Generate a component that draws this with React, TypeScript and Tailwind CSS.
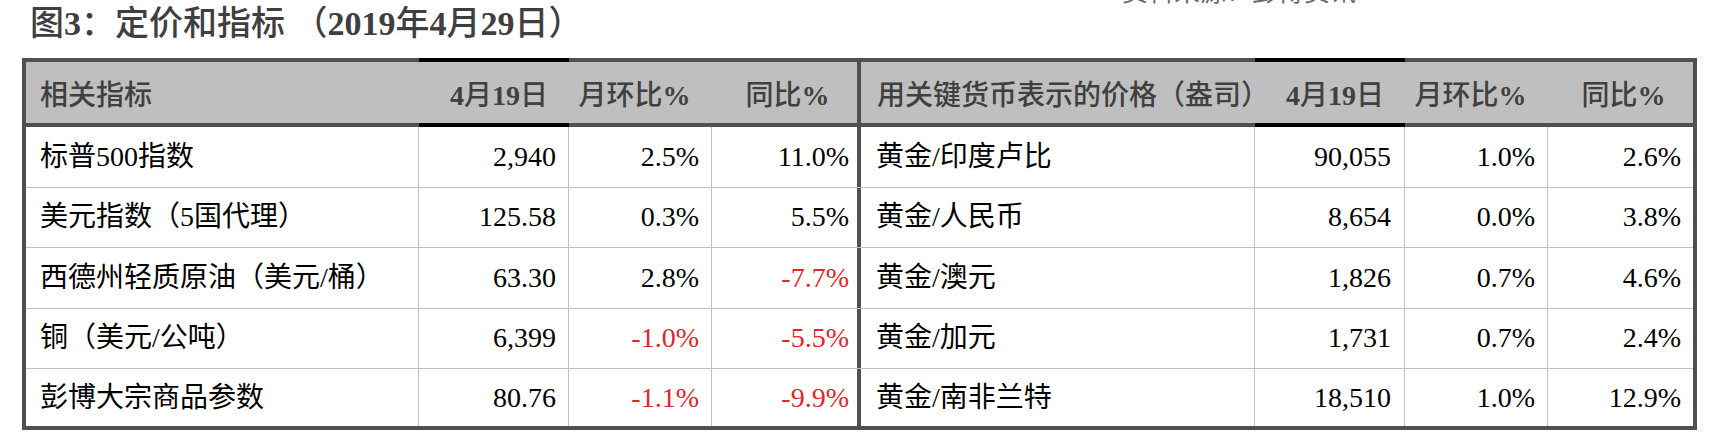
import React from "react";

const rowsL = [
  ["标普500指数", "2,940", "2.5%", "11.0%"],
  ["美元指数（5国代理）", "125.58", "0.3%", "5.5%"],
  ["西德州轻质原油（美元/桶）", "63.30", "2.8%", "-7.7%"],
  ["铜（美元/公吨）", "6,399", "-1.0%", "-5.5%"],
  ["彭博大宗商品参数", "80.76", "-1.1%", "-9.9%"],
];
const rowsR = [
  ["黄金/印度卢比", "90,055", "1.0%", "2.6%"],
  ["黄金/人民币", "8,654", "0.0%", "3.8%"],
  ["黄金/澳元", "1,826", "0.7%", "4.6%"],
  ["黄金/加元", "1,731", "0.7%", "2.4%"],
  ["黄金/南非兰特", "18,510", "1.0%", "12.9%"],
];

function Num({ v }: { v: string }) {
  return <span className={v.startsWith("-") ? "text-[#e0262b]" : "text-black"}>{v}</span>;
}

export default function App() {
  const heights = ["h-[60.5px]", "h-[60.5px]", "h-[60.5px]", "h-[60.5px]", "h-[57px]"];
  return (
    <div className="relative w-[1716px] h-[447px] overflow-hidden bg-white font-['Liberation_Serif','Noto_Sans_CJK_SC',serif]">
      <div className="absolute left-[1122px] top-[-20px] text-[26px] leading-[26px] text-[#6a6a6a] whitespace-nowrap">
        资料来源：彭博资讯
      </div>
      <div className="pt-[7px] pl-[30px] h-[41px] text-[34px] leading-[34px] text-[#3f3f3f] font-medium whitespace-nowrap">
        图<span className="font-bold">3</span>：定价和指标 （<span className="font-bold">2019</span>年
        <span className="font-bold">4</span>月<span className="font-bold">29</span>日）
      </div>
      <div className="mt-[17px] ml-[22px] w-[1675px] border-l-4 border-r-4 border-b-4 border-[#505050]">
        {/* header */}
        <div className="flex h-[69px] bg-[#bfbfbf] text-[28px] leading-[28px] text-[#404040] font-medium whitespace-nowrap">
          <div className="w-[393px] border-t-4 border-b-4 border-[#505050] flex items-center pl-[14px] pt-[7px] overflow-hidden">
            相关指标
          </div>
          <div className="w-[150px] border-t-4 border-b-4 border-black flex items-center justify-center pl-[10px] pt-[7px]">
            <span className="font-bold">4</span>月<span className="font-bold">19</span>日
          </div>
          <div className="w-[143px] border-t-4 border-b-4 border-[#505050] flex items-center justify-center pr-[12px] pt-[7px]">
            月环比<span className="font-bold">%</span>
          </div>
          <div className="w-[149px] border-t-4 border-b-4 border-r-4 border-[#505050] flex items-center justify-center pl-[6px] pt-[7px]">
            同比<span className="font-bold">%</span>
          </div>
          <div className="w-[394px] border-t-4 border-b-4 border-[#505050] flex items-center pl-[16px] pt-[7px] overflow-hidden">
            用关键货币表示的价格（盎司）
          </div>
          <div className="w-[150px] border-t-4 border-b-4 border-black flex items-center justify-center pl-[10px] pt-[7px]">
            <span className="font-bold">4</span>月<span className="font-bold">19</span>日
          </div>
          <div className="w-[143px] border-t-4 border-b-4 border-[#505050] flex items-center justify-center pr-[12px] pt-[7px]">
            月环比<span className="font-bold">%</span>
          </div>
          <div className="w-[145px] border-t-4 border-b-4 border-[#505050] flex items-center justify-center pl-[6px] pt-[7px]">
            同比<span className="font-bold">%</span>
          </div>
        </div>
        {/* body */}
        {rowsL.map((l, i) => {
          const r = rowsR[i];
          const last = i === rowsL.length - 1;
          return (
            <div
              key={i}
              className={`flex ${heights[i]} text-[28px] leading-[28px] text-black whitespace-nowrap ${
                last ? "" : "border-b border-[#c0c0c0]"
              }`}
            >
              <div className="w-[393px] border-r border-[#c0c0c0] flex items-center pl-[14px] overflow-hidden">
                {l[0]}
              </div>
              <div className="w-[150px] border-r border-[#c0c0c0] flex items-center justify-end pr-[12px]">
                <Num v={l[1]} />
              </div>
              <div className="w-[143px] border-r border-[#c0c0c0] flex items-center justify-end pr-[12px]">
                <Num v={l[2]} />
              </div>
              <div className="w-[149px] border-r-4 border-[#505050] flex items-center justify-end pr-[8px]">
                <Num v={l[3]} />
              </div>
              <div className="w-[394px] border-r border-[#c0c0c0] flex items-center pl-[15px] overflow-hidden">
                {r[0]}
              </div>
              <div className="w-[150px] border-r border-[#c0c0c0] flex items-center justify-end pr-[13px]">
                <Num v={r[1]} />
              </div>
              <div className="w-[143px] border-r border-[#c0c0c0] flex items-center justify-end pr-[12px]">
                <Num v={r[2]} />
              </div>
              <div className="w-[145px] flex items-center justify-end pr-[12px]">
                <Num v={r[3]} />
              </div>
            </div>
          );
        })}
      </div>
    </div>
  );
}
